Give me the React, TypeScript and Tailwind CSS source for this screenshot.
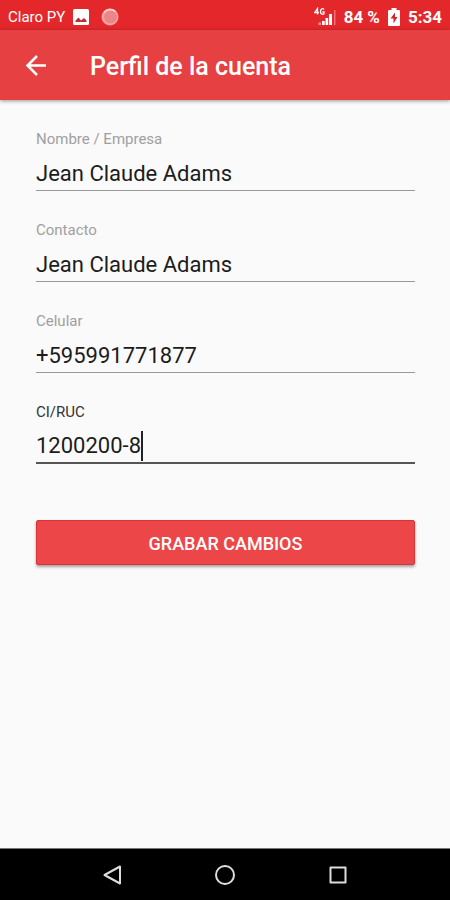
import { useState } from 'react';

interface Field {
  id: string;
  label: string;
  value: string;
  type: string;
}

const INITIAL_FIELDS: Field[] = [
  { id: 'nombre', label: 'Nombre / Empresa', value: 'Jean Claude Adams', type: 'text' },
  { id: 'contacto', label: 'Contacto', value: 'Jean Claude Adams', type: 'text' },
  { id: 'celular', label: 'Celular', value: '+595991771877', type: 'tel' },
  { id: 'ruc', label: 'CI/RUC', value: '1200200-8', type: 'text' },
];

function StatusBar() {
  return (
    <div className="flex h-[30px] items-center justify-between bg-[#e3272b] px-2 pt-1 text-white">
      <div className="flex items-center">
        <span className="text-[15px] leading-5">Claro PY</span>
        <svg viewBox="0 0 16 16" className="ml-2 h-4 w-4" aria-hidden="true">
          <rect width="16" height="16" rx="1.5" fill="#fff" />
          <path d="M2.5 13V11.5L5.5 8.5L8 11.5L11 9L13.5 11.5V13Z" fill="#c42b2f" />
        </svg>
        <svg viewBox="0 0 18 18" className="ml-3 h-[18px] w-[18px]" aria-hidden="true">
          <circle cx="9" cy="9" r="8.5" fill="#f3a3a4" />
          <circle cx="9.5" cy="9" r="6.5" fill="#ec8587" />
          <path d="M3 4.5A8 8 0 0 1 14.5 3.5" fill="none" stroke="#fbd5d5" strokeWidth="1.5" />
        </svg>
      </div>
      <div className="flex items-center text-[17px] leading-5 font-bold">
        {/* Mobile signal */}
        <svg viewBox="0 0 22 20" className="h-5 w-[22px]" aria-hidden="true">
          <path d="M3.5 7.5V1.5L0.8 5.5H5" fill="none" stroke="#fff" strokeWidth="1.3" />
          <path d="M10 2.5C9 1 6.5 1.5 6.5 4.5S9.5 8 10 6.5V5H8.5" fill="none" stroke="#fff" strokeWidth="1.3" />
          <path d="M8 14h2.7v4H8zM11.5 11h2.700v7h-2.700zM15 7h3v11h-3z" fill="#fff" />
          <path d="M4.5 15.500H7V18H4.500z" fill="#fff" opacity="0.5" />
          <path d="M20 3h1.500v15H20z" fill="#fff" opacity="0.35" />
        </svg>
        <span className="ml-2">84 %</span>
        <svg viewBox="0 0 12 18" className="ml-2 h-[18px] w-3" aria-hidden="true">
          <path d="M3.5 0H8.5V2H11Q12 2 12 3V17Q12 18 11 18H1Q0 18 0 17V3Q0 2 1 2H3.5Z" fill="#fff" />
          <path d="M7 4.5L2.5 10.5H5.5V15.5L9.5 9H7Z" fill="#d3262a" />
        </svg>
        <span className="ml-2">5:34</span>
      </div>
    </div>
  );
}

function AppBar() {
  return (
    <header className="flex h-[70px] items-center bg-[#e64042] px-6 text-white shadow-[0_1px_4px_rgba(0,0,0,0.4)]">
      <button type="button" aria-label="Volver" className="h-6 w-6">
        <svg viewBox="0 0 24 24" className="h-6 w-6" fill="none" stroke="currentColor" strokeWidth="2.5" aria-hidden="true">
          <path d="M22 12.5H4M13 3L3.5 12.5L13 22" />
        </svg>
      </button>
      <h1 className="ml-[42px] pt-1 text-[25px] leading-8 font-medium">Perfil de la cuenta</h1>
    </header>
  );
}

function NavigationBar() {
  return (
    <nav
      className="grid h-[52px] grid-cols-3 items-center justify-items-center border-t border-[#777] bg-black px-14 text-[#ddd]"
      aria-label="Sistema"
    >
      <button type="button" aria-label="Atrás">
        <svg viewBox="0 0 20 20" className="h-5 w-5" fill="none" stroke="currentColor" strokeWidth="2" strokeLinejoin="round" aria-hidden="true">
          <path d="M18 1.5V18.5L2.5 10Z" />
        </svg>
      </button>
      <button type="button" aria-label="Inicio">
        <svg viewBox="0 0 20 20" className="h-5 w-5" fill="none" stroke="currentColor" strokeWidth="2" aria-hidden="true">
          <circle cx="10" cy="10" r="9" />
        </svg>
      </button>
      <button type="button" aria-label="Recientes">
        <svg viewBox="0 0 20 20" className="h-5 w-5" fill="none" stroke="currentColor" strokeWidth="2" strokeLinejoin="round" aria-hidden="true">
          <path d="M2.5 2.5H17.5V17.5H2.5Z" />
        </svg>
      </button>
    </nav>
  );
}

export default function App() {
  const [fields, setFields] = useState(INITIAL_FIELDS);
  const [activeId, setActiveId] = useState('ruc');

  const updateField = (id: string, value: string) => {
    setFields((prev) => prev.map((field) => (field.id === id ? { ...field, value } : field)));
  };

  return (
    <div className="flex min-h-screen flex-col bg-[#fafafa] font-['Roboto',sans-serif]">
      <StatusBar />
      <AppBar />

      <main className="flex-1 px-9 pt-[29px] pr-[35px]">
        <form onSubmit={(e) => e.preventDefault()}>
          <div className="flex flex-col gap-[29px]">
            {fields.map((field) => {
              const isActive = field.id === activeId;
              return (
                <div key={field.id}>
                  <label
                    htmlFor={field.id}
                    className={
                      isActive
                        ? 'block text-[15px] leading-5 text-[#333]'
                        : 'block text-[15px] leading-5 text-[#a0a0a0]'
                    }
                  >
                    {field.label}
                  </label>
                  <div
                    className={
                      isActive
                        ? 'flex h-[42px] items-center border-b-2 border-[#555] pt-2'
                        : 'flex h-[42px] items-center border-b border-[#999] pt-2'
                    }
                  >
                    <input
                      id={field.id}
                      type={field.type}
                      value={field.value}
                      onChange={(e) => updateField(field.id, e.target.value)}
                      onFocus={() => setActiveId(field.id)}
                      className="h-8 max-w-full [field-sizing:content] bg-transparent text-[22px] leading-8 text-[#1c1c1c] caret-transparent outline-none"
                    />
                    {isActive && <span className="h-[30px] w-[2px] bg-[#222]" />}
                  </div>
                </div>
              );
            })}
          </div>

          <button
            type="submit"
            className="mt-14 h-[45px] w-full rounded-xs border border-[#dc3436] bg-[#ed4649] pt-[3px] text-lg leading-6 font-medium text-white shadow-[0_2px_3px_rgba(0,0,0,0.35)]"
          >
            GRABAR CAMBIOS
          </button>
        </form>
      </main>

      <NavigationBar />
    </div>
  );
}
